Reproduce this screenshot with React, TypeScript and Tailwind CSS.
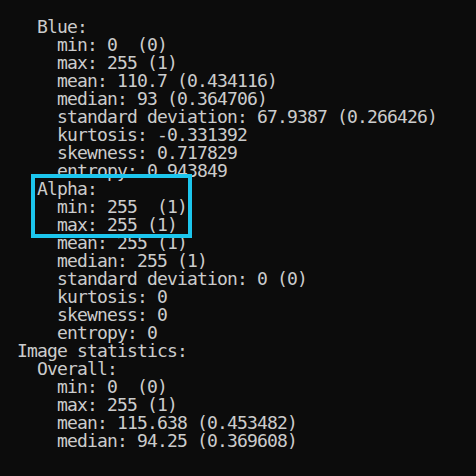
import React from "react";

const lines = [
  "   Blue:",
  "     min: 0  (0)",
  "     max: 255 (1)",
  "     mean: 110.7 (0.434116)",
  "     median: 93 (0.364706)",
  "     standard deviation: 67.9387 (0.266426)",
  "     kurtosis: -0.331392",
  "     skewness: 0.717829",
  "     entropy: 0.943849",
  "   Alpha:",
  "     min: 255  (1)",
  "     max: 255 (1)",
  "     mean: 255 (1)",
  "     median: 255 (1)",
  "     standard deviation: 0 (0)",
  "     kurtosis: 0",
  "     skewness: 0",
  "     entropy: 0",
  " Image statistics:",
  "   Overall:",
  "     min: 0  (0)",
  "     max: 255 (1)",
  "     mean: 115.638 (0.453482)",
  "     median: 94.25 (0.369608)",
];

export default function App() {
  return (
    <div className="relative w-[476px] h-[476px] overflow-hidden bg-[#0c0c0c]">
      <div
        className="pl-[7px] pt-[18px] text-[18px] leading-[18px] tracking-[-0.836px] text-[#cccccc] whitespace-pre"
        style={{ fontFamily: '"DejaVu Sans Mono", monospace' }}
      >
        {lines.map((l, i) => (
          <div key={i} className="h-[18px]">
            {l}
          </div>
        ))}
      </div>
      <div className="absolute left-[31px] top-[174px] w-[161px] h-[64px] border-4 border-[#1cc6ee]" />
    </div>
  );
}
